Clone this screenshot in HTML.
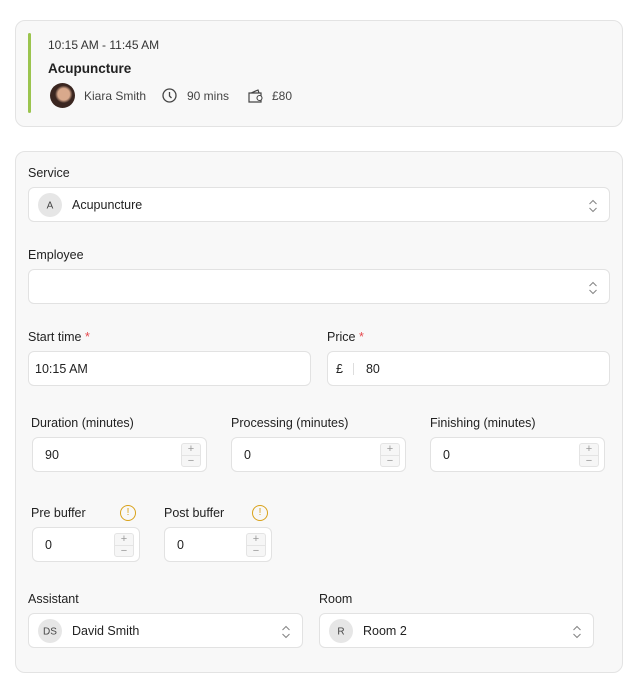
<!DOCTYPE html><html><head><style>
*{box-sizing:border-box;margin:0;padding:0}
body{width:639px;height:685px;background:#fff;font-family:"Liberation Sans",sans-serif;color:#222;position:relative;overflow:hidden}
.a{position:absolute}
.card{position:absolute;left:15px;width:608px;background:#f8f8f8;border:1px solid #e3e3e3;border-radius:10px}
.lbl{position:absolute;font-size:12.5px;color:#222}
.req{color:#e5484d}
.box{position:absolute;background:#fff;border:1px solid #e2e2e2;border-radius:6px;height:35px;font-size:12.5px;display:flex;align-items:center}
.av{margin:0 10px 0 9px;flex:none;display:block}
.chev{position:absolute;right:11px;top:11px}
.st{position:absolute;right:5px;top:5px;width:20px;height:24px;border:1px solid #e4e4e4;border-radius:3px;background:#f6f6f6;font-size:11px;color:#999;text-align:center;line-height:11px}
.st div{height:11.5px}
.st div:first-child{border-bottom:1px solid #e4e4e4}
.warn{position:absolute;width:16px;height:16px;border:1.5px solid #d9a21b;border-radius:50%;color:#d9a21b;font-size:10px;text-align:center;line-height:13px}
</style></head><body>
<div class="card" style="top:20px;height:107px"></div>
<div class="a" style="left:28px;top:33px;width:3px;height:80px;background:#9bc44e;border-radius:2px"></div>
<div class="a" style="left:48px;top:38px;font-size:12px;color:#333">10:15 AM - 11:45 AM</div>
<div class="a" style="left:48px;top:61px;font-size:13.5px;font-weight:bold">Acupuncture</div>
<div class="a" style="left:50px;top:83px;width:25px;height:25px;border-radius:50%;background:radial-gradient(circle at 55% 45%,#d9a98c 0 30%,#3a2620 45%)"></div>
<div class="a" style="left:84px;top:89px;font-size:12px;color:#444">Kiara Smith</div>
<svg class="a" style="left:161px;top:87px" width="17" height="17" viewBox="0 0 17 17"><circle cx="8.5" cy="8.5" r="6.5" fill="none" stroke="#444" stroke-width="1.3"/><path d="M8.5 5v4l2 2" fill="none" stroke="#444" stroke-width="1.3"/></svg>
<div class="a" style="left:187px;top:89px;font-size:12px;color:#444">90 mins</div>
<svg class="a" style="left:247px;top:87px" width="18" height="17" viewBox="0 0 18 17"><path d="M2 6h12v9H2z M4 6l7-3 1 3" fill="none" stroke="#444" stroke-width="1.2"/><circle cx="12.5" cy="11" r="2.5" fill="#fff" stroke="#444" stroke-width="1.1"/></svg>
<div class="a" style="left:272px;top:89px;font-size:12px;color:#444">£80</div>

<div class="card" style="top:151px;height:522px"></div>
<div class="lbl" style="left:28px;top:166px">Service</div>
<div class="box" style="left:28px;top:187px;width:582px"><svg class="av" width="24" height="24"><circle cx="12" cy="12" r="12" fill="#e6e6e6"/><text x="12" y="15.5" text-anchor="middle" font-size="10" font-family="Liberation Sans" fill="#444">A</text></svg>Acupuncture<svg class="chev" width="10" height="14" viewBox="0 0 10 14"><path d="M1.5 5l3.5-3.5 3.5 3.5M1.5 9l3.5 3.5 3.5-3.5" fill="none" stroke="#888" stroke-width="1.1"/></svg></div>
<div class="lbl" style="left:28px;top:248px">Employee</div>
<div class="box" style="left:28px;top:269px;width:582px"><svg class="chev" width="10" height="14" viewBox="0 0 10 14"><path d="M1.5 5l3.5-3.5 3.5 3.5M1.5 9l3.5 3.5 3.5-3.5" fill="none" stroke="#888" stroke-width="1.1"/></svg></div>
<div class="lbl" style="left:28px;top:330px">Start time <span class="req">*</span></div>
<div class="box" style="left:28px;top:351px;width:283px;padding-left:6px">10:15 AM</div>
<div class="lbl" style="left:327px;top:330px">Price <span class="req">*</span></div>
<div class="box" style="left:327px;top:351px;width:283px;padding-left:8px">£<span style="display:inline-block;width:1px;height:12px;background:#ddd;margin:0 12px 0 10px"></span>80</div>

<div class="lbl" style="left:31px;top:416px">Duration (minutes)</div>
<div class="lbl" style="left:231px;top:416px">Processing (minutes)</div>
<div class="lbl" style="left:430px;top:416px">Finishing (minutes)</div>
<div class="box" style="left:32px;top:437px;width:175px;padding-left:12px">90<div class="st"><div>+</div><div>−</div></div></div>
<div class="box" style="left:231px;top:437px;width:175px;padding-left:12px">0<div class="st"><div>+</div><div>−</div></div></div>
<div class="box" style="left:430px;top:437px;width:175px;padding-left:12px">0<div class="st"><div>+</div><div>−</div></div></div>

<div class="lbl" style="left:31px;top:506px">Pre buffer</div>
<div class="warn" style="left:120px;top:505px">!</div>
<div class="lbl" style="left:164px;top:506px">Post buffer</div>
<div class="warn" style="left:252px;top:505px">!</div>
<div class="box" style="left:32px;top:527px;width:108px;padding-left:12px">0<div class="st"><div>+</div><div>−</div></div></div>
<div class="box" style="left:164px;top:527px;width:108px;padding-left:12px">0<div class="st"><div>+</div><div>−</div></div></div>

<div class="lbl" style="left:28px;top:592px">Assistant</div>
<div class="lbl" style="left:319px;top:592px">Room</div>
<div class="box" style="left:28px;top:613px;width:275px"><svg class="av" width="24" height="24"><circle cx="12" cy="12" r="12" fill="#e6e6e6"/><text x="12" y="15.5" text-anchor="middle" font-size="10" font-family="Liberation Sans" fill="#444">DS</text></svg>David Smith<svg class="chev" width="10" height="14" viewBox="0 0 10 14"><path d="M1.5 5l3.5-3.5 3.5 3.5M1.5 9l3.5 3.5 3.5-3.5" fill="none" stroke="#888" stroke-width="1.1"/></svg></div>
<div class="box" style="left:319px;top:613px;width:275px"><svg class="av" width="24" height="24"><circle cx="12" cy="12" r="12" fill="#e6e6e6"/><text x="12" y="15.5" text-anchor="middle" font-size="10" font-family="Liberation Sans" fill="#444">R</text></svg>Room 2<svg class="chev" width="10" height="14" viewBox="0 0 10 14"><path d="M1.5 5l3.5-3.5 3.5 3.5M1.5 9l3.5 3.5 3.5-3.5" fill="none" stroke="#888" stroke-width="1.1"/></svg></div>
</body></html>
